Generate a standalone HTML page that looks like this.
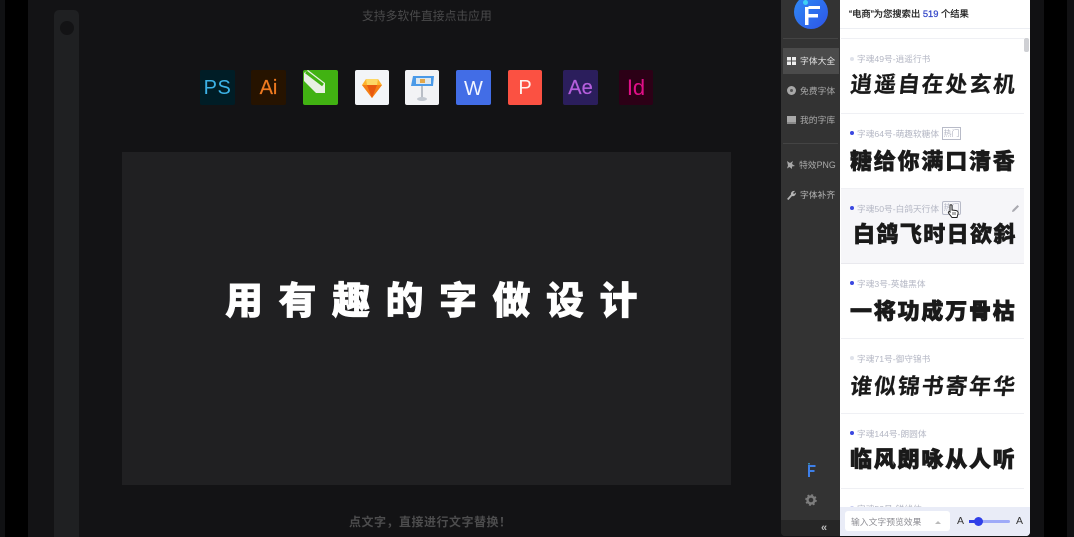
<!DOCTYPE html>
<html lang="zh"><head><meta charset="utf-8"><title>字魂</title>
<style>
*{margin:0;padding:0;box-sizing:border-box}
html,body{width:1074px;height:537px;overflow:hidden;background:#131315}
body{position:relative;font-family:"Liberation Sans","Noto Sans CJK SC",sans-serif;filter:blur(.35px)}
.a{position:absolute;white-space:nowrap}
.ic{position:absolute;top:70px;width:35px;height:35px;border-radius:2px;font-size:20px;line-height:37px;text-align:center;font-family:"Liberation Sans",sans-serif}
.nav{position:absolute;left:800px;font-size:8.8px;color:#bdbdbd;line-height:12px;white-space:nowrap}
.sep{position:absolute;left:841px;width:183px;height:1px;background:#eff0f4}
.lb{position:absolute;left:857px;font-size:8.7px;line-height:12px;color:#b4b7c4;white-space:nowrap}
.dot{position:absolute;left:850px;width:4px;height:4px;border-radius:50%;background:#3a47e0}
.s{position:absolute;left:850px;width:172px;font-family:"Noto Sans CJK SC",sans-serif;font-weight:900;font-size:22px;line-height:28px;letter-spacing:1.8px;color:#1a1a1a;white-space:nowrap;-webkit-text-stroke:.5px #1a1a1a}
.b{font-family:"Noto Sans CJK SC",sans-serif;font-weight:700;-webkit-text-stroke:.2px #1a1a1a;transform:skewX(-6deg);transform-origin:0 100%}
</style></head><body>
<div class="a" style="left:0;top:0;width:5px;height:537px;background:#101113"></div>
<div class="a" style="left:5px;top:0;width:23px;height:537px;background:#000"></div>
<div class="a" style="left:54px;top:10px;width:25px;height:527px;background:#1f2022;border-radius:5px 5px 0 0"></div>
<div class="a" style="left:60px;top:21px;width:14px;height:14px;border-radius:50%;background:#131315"></div>
<div class="a" style="left:362px;top:9px;font-size:11.8px;line-height:15px;color:#4a4a4b">支持多软件直接点击应用</div>

<div class="ic" style="left:200px;background:#001d26;color:#3cb2e6;font-size:20px;letter-spacing:.5px">PS</div>
<div class="ic" style="left:251px;background:#261300;color:#ef7a20;-webkit-text-stroke:.2px #ef7a20">Ai</div>
<div class="ic" style="left:303px;background:#41b212;overflow:hidden"><svg width="35" height="35" viewBox="0 0 35 35" style="position:absolute;left:0;top:0"><path d="M1 3L5 0L22 13V23H13L1 11Z" fill="#e8f0e2"/><path d="M3 2L20 15" stroke="#41b212" stroke-width="3" fill="none"/></svg></div>
<div class="ic" style="left:355px;background:#f3f5f8;width:34px"><svg width="34" height="35" viewBox="0 0 34 35" style="position:absolute;left:0;top:0"><path d="M7 15L11 9H23L27 15L17 28Z" fill="#fdb32c"/><path d="M7 15H27L17 28Z" fill="#f57e17"/><path d="M12 15H22L17 28Z" fill="#e8590f"/><path d="M11 9H23L22 15H12Z" fill="#fdd866"/></svg></div>
<div class="ic" style="left:405px;background:#f2f3f5;width:34px"><svg width="34" height="35" viewBox="0 0 34 35" style="position:absolute;left:0;top:0"><path d="M8 6H29L28 16H6Z" fill="#4a9ae8"/><rect x="11" y="8" width="15" height="6" fill="#dfe8ee"/><rect x="15" y="9" width="5" height="4" fill="#e3a84a"/><rect x="16" y="16" width="2" height="12" fill="#b9bec6"/><ellipse cx="17" cy="29" rx="5" ry="2" fill="#c2c8d0"/></svg></div>
<div class="ic" style="left:456px;background:#426de6;color:#f2f5ff;font-size:20px;line-height:38px">W</div>
<div class="ic" style="left:508px;width:34px;background:#fb5142;color:#fff2ee;font-size:20px;line-height:37px">P</div>
<div class="ic" style="left:563px;background:#2b1e5c;color:#b55fdc;-webkit-text-stroke:.2px #b55fdc">Ae</div>
<div class="ic" style="left:619px;width:34px;background:#2c0016;color:#e00f88;font-size:22px;line-height:36px">Id</div>

<div class="a" style="left:122px;top:152px;width:609px;height:333px;background:#202022"></div>
<div class="a" style="left:225px;top:275px;font-family:'Noto Sans CJK SC',sans-serif;font-weight:900;font-size:38px;line-height:46px;letter-spacing:15.5px;color:#fff;-webkit-text-stroke:.6px #fff">用有趣的字做设计</div>
<div class="a" style="left:349px;top:515px;font-size:12px;line-height:15px;font-weight:700;color:#4c4c4d;letter-spacing:.5px">点文字，直接进行文字替换！</div>

<div class="a" style="left:1030px;top:0;width:14px;height:537px;background:#111113"></div>
<div class="a" style="left:1044px;top:0;width:23px;height:537px;background:#000"></div>
<div class="a" style="left:1067px;top:0;width:7px;height:537px;background:#111113"></div>

<!-- sidebar -->
<div class="a" style="left:781px;top:0;width:60px;height:536px;background:#333;border-radius:0 0 0 4px"></div>
<div class="a" style="left:794px;top:-5px;width:34px;height:34px;border-radius:50%;background:linear-gradient(135deg,#2f8cf6,#2e54e6)"></div>
<div class="a" style="left:803px;top:0;width:5px;height:5px;border-radius:50%;background:#3fd0f5"></div>
<svg class="a" style="left:800px;top:0" width="24" height="28" viewBox="0 0 24 28"><path d="M5 7H8.500V25H5ZM8.500 6H20V9H8.500ZM8.500 14H18V17.500H8.500Z" fill="#fff"/></svg>
<div class="a" style="left:783px;top:38px;width:55px;height:1px;background:#444"></div>
<div class="a" style="left:783px;top:48px;width:56px;height:26px;background:#4b4b4b"></div>
<svg class="a" style="left:787px;top:57px" width="9" height="8"><path d="M0 0H4V3.500H0ZM5 0H9V3.500H5ZM0 4.500H4V8H0ZM5 4.500H9V8H5Z" fill="#eee"/></svg>
<div class="nav" style="top:55px;color:#e4e4e4">字体大全</div>
<div class="a" style="left:787px;top:86px;width:9px;height:9px;border-radius:50%;background:#a8a8a8"></div>
<div class="a" style="left:790px;top:89px;width:3px;height:3px;border-radius:50%;background:#555"></div>
<div class="nav" style="top:85px;left:800px;color:#aaa">免费字体</div>
<div class="a" style="left:787px;top:116px;width:9px;height:8px;background:#a8a8a8;border-bottom:2px solid #888"></div>
<div class="nav" style="top:114px;color:#aaa">我的字库</div>
<div class="a" style="left:783px;top:143px;width:55px;height:1px;background:#444"></div>
<svg class="a" style="left:786px;top:160px" width="10" height="10"><path d="M1 1L4 3L7 1L6 4L9 6L6 6.500L6 9L3.500 7L1 8.500L2 5.500Z" fill="#a8a8a8"/></svg>
<div class="nav" style="top:159px;color:#aaa;left:799px">特效PNG</div>
<svg class="a" style="left:786px;top:190px" width="10" height="10"><path d="M1 9L5 4.500C4.500 2.500 6.500 .5 9 1L7 3L8 4L10 2.500C10 5 8 6.800 6 6L2.500 10Z" fill="#b5b5b5"/></svg>
<div class="nav" style="top:189px;color:#b8b8b8">字体补齐</div>
<svg class="a" style="left:807px;top:463px" width="9" height="15"><path d="M1 2H3V14H1ZM3 2H8.500V4H3ZM3 7H7.500V9H3Z" fill="#3d7fe8"/><circle cx="2" cy=".8" r=".8" fill="#41b8ee"/></svg>
<svg class="a" style="left:805px;top:494px" width="12" height="12" viewBox="0 0 12 12"><circle cx="6" cy="6" r="3.500" fill="none" stroke="#7d7d7d" stroke-width="2.400"/><circle cx="6" cy="6" r="5" fill="none" stroke="#7d7d7d" stroke-width="1.600" stroke-dasharray="2 1.930"/></svg>
<div class="a" style="left:781px;top:520px;width:60px;height:16px;background:#262626;border-radius:0 0 0 4px"></div>
<div class="a" style="left:821px;top:521px;font-size:11px;line-height:14px;color:#bbb;font-weight:700">«</div>

<!-- panel -->
<div class="a" style="left:840px;top:0;width:190px;height:536px;background:#fff;border-radius:0 0 4px 0;overflow:hidden"></div>
<div class="a" style="left:840px;top:28px;width:190px;height:1px;background:#eceef3"></div>
<div class="a" style="left:849px;top:8px;font-size:9.300px;line-height:12px;color:#222;-webkit-text-stroke:.25px #222">“电商”为您搜索出 <span style="color:#3346c8;-webkit-text-stroke:.25px #3346c8">519</span> 个结果</div>
<div class="a" style="left:1024px;top:38px;width:5px;height:14px;background:#cfd0d4;border-radius:2px"></div>
<div class="sep" style="top:38px"></div>

<div class="dot" style="top:57px;background:#dfe2ea"></div><div class="lb" style="top:53px">字魂49号-逍遥行书</div>
<div class="s b" style="top:69px;left:849px">逍遥自在处玄机</div>
<div class="sep" style="top:113px"></div>

<div class="dot" style="top:131px"></div><div class="lb" style="top:128px">字魂64号-萌趣软糖体</div>
<div class="a" style="left:942px;top:127px;width:19px;height:13px;border:1px solid #b8bbc8;font-size:8px;line-height:11px;text-align:center;color:#b4b7c4">热门</div>
<div class="s" style="top:146px">糖给你满口清香</div>
<div class="sep" style="top:188px"></div>

<div class="a" style="left:841px;top:189px;width:183px;height:75px;background:#f6f6f9"></div>
<div class="dot" style="top:206px"></div><div class="lb" style="top:203px">字魂50号-白鸽天行体</div>
<div class="a" style="left:942px;top:201px;width:19px;height:14px;border:1px solid #b8bbc8;border-radius:2px;font-size:8px;line-height:12px;text-align:center;color:#b4b7c4">热门</div>
<svg class="a" style="left:947px;top:204px" width="13" height="15" viewBox="0 0 13 15"><path d="M3 1.500C3 .5 5 .5 5 1.500V6L9 6.500C11 7 11.500 8 11 10L10 13.500H5L1.500 9C1 8 2 7 3 8Z" fill="#fff" stroke="#222" stroke-width="1"/><path d="M6 8V11M8 8V11" stroke="#222" stroke-width=".7"/></svg>
<svg class="a" style="left:1011px;top:204px" width="9" height="9"><path d="M1 8L1.500 6L6.500 1L8 2.500L3 7.500Z" fill="#a9a9b0"/></svg>
<div class="s" style="top:219px;left:853px;letter-spacing:1.4px">白鸽飞时日欲斜</div>
<div class="sep" style="top:263px;background:#e9e9ee"></div>

<div class="dot" style="top:281px"></div><div class="lb" style="top:278px">字魂3号-英雄黑体</div>
<div class="s" style="top:296px;-webkit-text-stroke:.7px #1a1a1a">一将功成万骨枯</div>
<div class="sep" style="top:338px"></div>

<div class="dot" style="top:356px;background:#dfe2ea"></div><div class="lb" style="top:353px">字魂71号-御守锦书</div>
<div class="s b" style="top:371px;left:849px">谁似锦书寄年华</div>
<div class="sep" style="top:413px"></div>

<div class="dot" style="top:431px"></div><div class="lb" style="top:428px">字魂144号-朗圆体</div>
<div class="s" style="top:444px;-webkit-text-stroke:.7px #1a1a1a">临风朗咏从人听</div>
<div class="sep" style="top:488px"></div>

<div class="dot" style="top:506px;background:#c9cdf0"></div><div class="lb" style="top:503px">字魂52号-锐线体</div>

<div class="a" style="left:840px;top:507px;width:190px;height:29px;background:#e9ecf7;border-radius:0 0 4px 0"></div>
<div class="a" style="left:845px;top:511px;width:105px;height:20px;background:#fff;border-radius:3px"></div>
<div class="a" style="left:851px;top:516px;font-size:8.800px;line-height:12px;color:#8e8e94">输入文字预览效果</div>
<div class="a" style="left:935px;top:521px;width:0;height:0;border-left:3px solid transparent;border-right:3px solid transparent;border-bottom:3px solid #bbb"></div>
<div class="a" style="left:957px;top:515px;font-size:10.500px;line-height:12px;color:#333">A</div>
<div class="a" style="left:969px;top:520px;width:41px;height:3px;border-radius:2px;background:#9eaaf8"></div>
<div class="a" style="left:969px;top:520px;width:10px;height:3px;background:#2f3fe8"></div>
<div class="a" style="left:974px;top:517px;width:9px;height:9px;border-radius:50%;background:#2f3fe8"></div>
<div class="a" style="left:1016px;top:515px;font-size:10.500px;line-height:12px;color:#333">A</div>
</body></html>
